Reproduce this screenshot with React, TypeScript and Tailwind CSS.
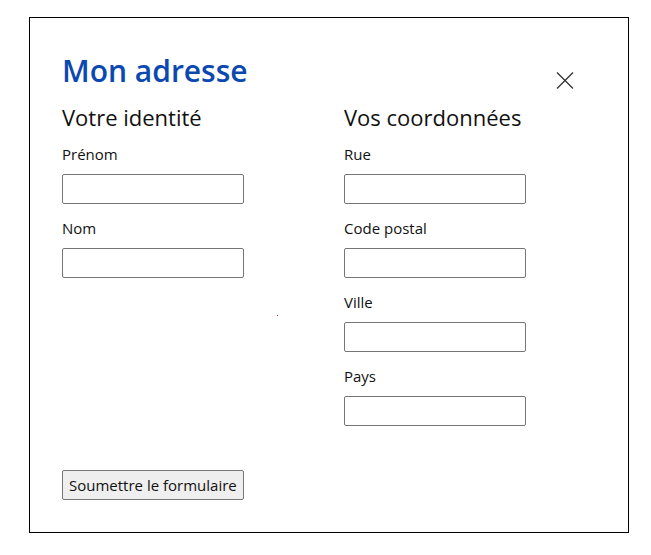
const font = { fontFamily: '"Open Sans", "Noto Sans", sans-serif' };

function Field({ label }: { label: string }) {
  return (
    <label className="flex flex-col">
      <span className="text-[15px] leading-[22px] text-[#111]">{label}</span>
      <input
        type="text"
        className="mt-[9px] h-[30px] w-[182px] rounded-[2px] border border-[#767676] bg-white"
      />
    </label>
  );
}

export default function App() {
  return (
    <div className="min-h-[555px] bg-white pl-[29px] pt-[17px]" style={font}>
      <div className="relative h-[516px] w-[600px] border border-black pl-[32px] pt-[32px]">
        <button
          type="button"
          aria-label="Fermer"
          className="absolute left-[526px] top-[54px] text-[#333]"
        >
          <svg width="18" height="17" viewBox="0 0 18 17" fill="none" stroke="currentColor" strokeWidth="1.3">
            <path d="M1 0.5 L17 16.5 M17 0.5 L1 16.5" />
          </svg>
        </button>
        <h1 className="mb-[9px] text-[30px] font-semibold leading-[42px] text-[#0b49b1]">Mon adresse</h1>
        <div className="grid grid-cols-[282px_200px]">
          <section>
            <h2 className="mb-[10px] text-[22px] leading-[32px] text-[#111]">Votre identité</h2>
            <div className="flex flex-col gap-[13px]">
              <Field label="Prénom" />
              <Field label="Nom" />
            </div>
          </section>
          <section>
            <h2 className="mb-[10px] text-[22px] leading-[32px] text-[#111]">Vos coordonnées</h2>
            <div className="flex flex-col gap-[13px]">
              <Field label="Rue" />
              <Field label="Code postal" />
              <Field label="Ville" />
              <Field label="Pays" />
            </div>
          </section>
        </div>
        <span className="absolute left-[247px] top-[297px] h-[1px] w-[1px] bg-[#c0304a]" />
        <button
          type="submit"
          className="mt-[44px] h-[30px] rounded-[2px] border border-[#767676] bg-[#efefef] px-[6px] text-[15px] text-[#111]"
        >
          Soumettre le formulaire
        </button>
      </div>
    </div>
  );
}
